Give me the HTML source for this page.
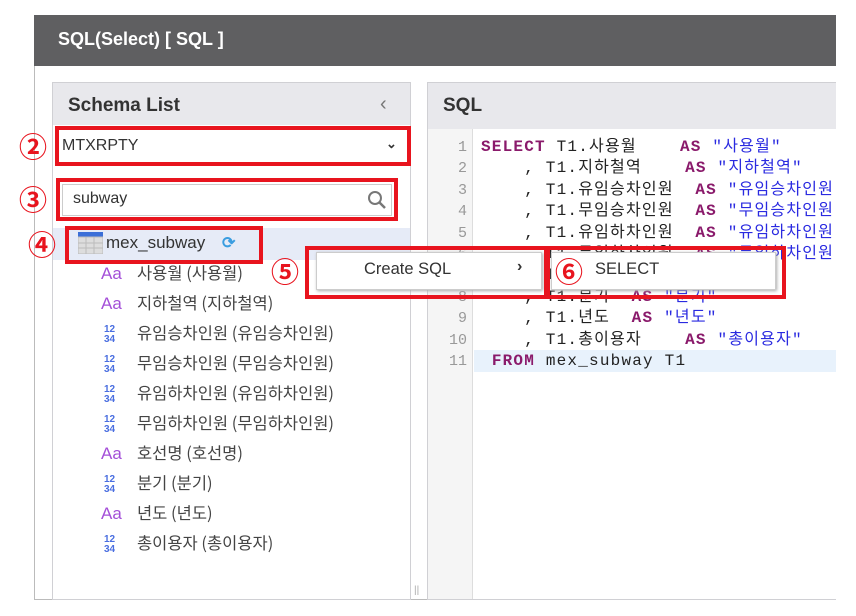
<!DOCTYPE html>
<html><head><meta charset="utf-8"><style>
*{margin:0;padding:0;box-sizing:border-box}
body{width:856px;height:616px;background:#fff;position:relative;overflow:hidden;font-family:"Liberation Sans","Noto Sans CJK KR",sans-serif}
.a{position:absolute}
.red{position:absolute;border:4px solid #e8141e}
.num{position:absolute;color:#e8141e;font-size:28px;font-weight:bold;line-height:30px;font-family:"Noto Sans CJK KR",sans-serif}
.item{position:absolute;left:101px;font-size:16.5px;color:#444;font-family:"Noto Sans CJK KR",sans-serif;line-height:20px}
.aa{display:inline-block;width:36px;color:#a44fd8;font-family:"Liberation Sans",sans-serif;font-size:17px}
.n{display:inline-block;width:36px;color:#4a6ee0;font-size:10px;line-height:10px;font-weight:bold;vertical-align:middle;font-family:"Liberation Sans",sans-serif;padding-left:3px}
.code{position:absolute;left:481px;font-family:"Liberation Mono","Noto Sans CJK KR",monospace;font-size:16px;letter-spacing:1.2px;line-height:21.4px;white-space:pre;color:#222}
.ln{position:absolute;left:440px;width:27px;text-align:right;font-family:"Liberation Mono",monospace;font-size:15px;line-height:21.4px;color:#999}
.k{color:#8a1a6b;font-weight:bold}.s{color:#2a2ae0}
#clip{position:absolute;left:0;top:0;width:836px;height:616px;overflow:hidden}
</style></head><body>
<div id="clip">
<div class="a" style="left:34px;top:15px;width:803px;height:585px;border-left:1px solid #bbb;border-bottom:1px solid #bbb"></div>
<div class="a" style="left:34px;top:15px;width:802px;height:51px;background:#5f5f61;color:#fff;font-size:18px;font-weight:bold;padding:14px 0 0 24px">SQL(Select) [ SQL ]</div>
<!-- left panel -->
<div class="a" style="left:52px;top:82px;width:359px;height:518px;border:1px solid #d0d0d4;background:#fff"></div>
<div class="a" style="left:53px;top:83px;width:357px;height:42px;background:#e8e8ec"></div>
<div class="a" style="left:68px;top:95px;font-size:19px;font-weight:bold;color:#333">Schema List</div>
<div class="a" style="left:380px;top:93px;font-size:20px;color:#777">‹</div>
<div class="a" style="left:58px;top:129px;width:349px;height:33px;background:#fff"></div>
<div class="a" style="left:62px;top:137px;font-size:16px;color:#333">MTXRPTY</div>
<div class="a" style="left:386px;top:136px;font-size:13px;color:#333;font-weight:bold">⌄</div>
<div class="a" style="left:62px;top:184px;width:330px;height:32px;border:1px solid #ccc"></div>
<div class="a" style="left:73px;top:190px;font-size:16px;color:#333">subway</div>
<svg class="a" style="left:367px;top:190px" width="20" height="20"><circle cx="8" cy="8" r="6" fill="none" stroke="#777" stroke-width="2"/><line x1="12.5" y1="12.5" x2="18" y2="18" stroke="#777" stroke-width="2.5"/></svg>
<div class="a" style="left:53px;top:228px;width:357px;height:32px;background:#e6ebf7"></div>
<svg class="a" style="left:78px;top:232px" width="25" height="22"><rect x="0" y="0" width="25" height="5" fill="#3b6fd8"/><rect x="0" y="5" width="25" height="17" fill="#ddd" stroke="#bbb"/><path d="M8 5V22M16 5V22M0 11H25M0 16H25" stroke="#bbb"/></svg>
<div class="a" style="left:106px;top:233px;font-size:17px;color:#333">mex_subway</div>
<div class="a" style="left:222px;top:233px;font-size:16px;color:#3a9de0;font-weight:bold">⟳</div>
<div class="item" style="top:262px"><span class="aa">Aa</span>사용월 (사용월)</div>
<div class="item" style="top:292px"><span class="aa">Aa</span>지하철역 (지하철역)</div>
<div class="item" style="top:322px"><span class="n">12<br>34</span>유임승차인원 (유임승차인원)</div>
<div class="item" style="top:352px"><span class="n">12<br>34</span>무임승차인원 (무임승차인원)</div>
<div class="item" style="top:382px"><span class="n">12<br>34</span>유임하차인원 (유임하차인원)</div>
<div class="item" style="top:412px"><span class="n">12<br>34</span>무임하차인원 (무임하차인원)</div>
<div class="item" style="top:442px"><span class="aa">Aa</span>호선명 (호선명)</div>
<div class="item" style="top:472px"><span class="n">12<br>34</span>분기 (분기)</div>
<div class="item" style="top:502px"><span class="aa">Aa</span>년도 (년도)</div>
<div class="item" style="top:532px"><span class="n">12<br>34</span>총이용자 (총이용자)</div>
<!-- right panel -->
<div class="a" style="left:427px;top:82px;width:420px;height:518px;border:1px solid #d0d0d4;background:#fff"></div>
<div class="a" style="left:428px;top:83px;width:420px;height:46px;background:#e8e8ec"></div>
<div class="a" style="left:443px;top:95px;font-size:19px;font-weight:bold;color:#333">SQL</div>
<div class="a" style="left:428px;top:129px;width:45px;height:470px;background:#f5f5f5;border-right:1px solid #ddd"></div>
<div class="a" style="left:474px;top:350px;width:370px;height:22px;background:#e8f2fc"></div>
<div class="ln" style="top:137px">1<br>2<br>3<br>4<br>5<br>6<br>7<br>8<br>9<br>10<br>11</div>
<div class="code" style="top:137px"><span class="k">SELECT</span> T1.사용월    <span class="k">AS</span> <span class="s">"사용월"</span>
    , T1.지하철역    <span class="k">AS</span> <span class="s">"지하철역"</span>
    , T1.유임승차인원  <span class="k">AS</span> <span class="s">"유임승차인원"</span>
    , T1.무임승차인원  <span class="k">AS</span> <span class="s">"무임승차인원"</span>
    , T1.유임하차인원  <span class="k">AS</span> <span class="s">"유임하차인원"</span>
    , T1.무임하차인원  <span class="k">AS</span> <span class="s">"무임하차인원"</span>
    , T1.호선명  <span class="k">AS</span> <span class="s">"호선명"</span>
    , T1.분기  <span class="k">AS</span> <span class="s">"분기"</span>
    , T1.년도  <span class="k">AS</span> <span class="s">"년도"</span>
    , T1.총이용자    <span class="k">AS</span> <span class="s">"총이용자"</span>
 <span class="k">FROM</span> mex_subway T1</div>
<div class="a" style="left:414px;top:585px;font-size:10px;color:#aaa">||</div>
</div>
<!-- menus -->
<div class="a" style="left:316px;top:252px;width:226px;height:38px;background:#fff;border:1px solid #ccc;box-shadow:1px 1px 3px #aaa"></div>
<div class="a" style="left:364px;top:260px;font-size:16.5px;color:#333">Create SQL</div>
<div class="a" style="left:517px;top:258px;font-size:16px;color:#333;font-weight:bold">›</div>
<div class="a" style="left:551px;top:252px;width:225px;height:38px;background:#fff;border:1px solid #ccc;box-shadow:1px 1px 3px #aaa"></div>
<div class="a" style="left:595px;top:260px;font-size:16.5px;color:#333">SELECT</div>
<!-- red boxes -->
<div class="red" style="left:55px;top:126px;width:356px;height:40px"></div>
<div class="red" style="left:56px;top:178px;width:342px;height:43px"></div>
<div class="red" style="left:65px;top:226px;width:198px;height:38px"></div>
<div class="red" style="left:305px;top:246px;width:243px;height:53px"></div>
<div class="red" style="left:546px;top:246px;width:240px;height:53px"></div>
<div class="num" style="left:19px;top:131px">②</div>
<div class="num" style="left:19px;top:184px">③</div>
<div class="num" style="left:28px;top:229px">④</div>
<div class="num" style="left:271px;top:256px">⑤</div>
<div class="num" style="left:555px;top:256px">⑥</div>
</body></html>
